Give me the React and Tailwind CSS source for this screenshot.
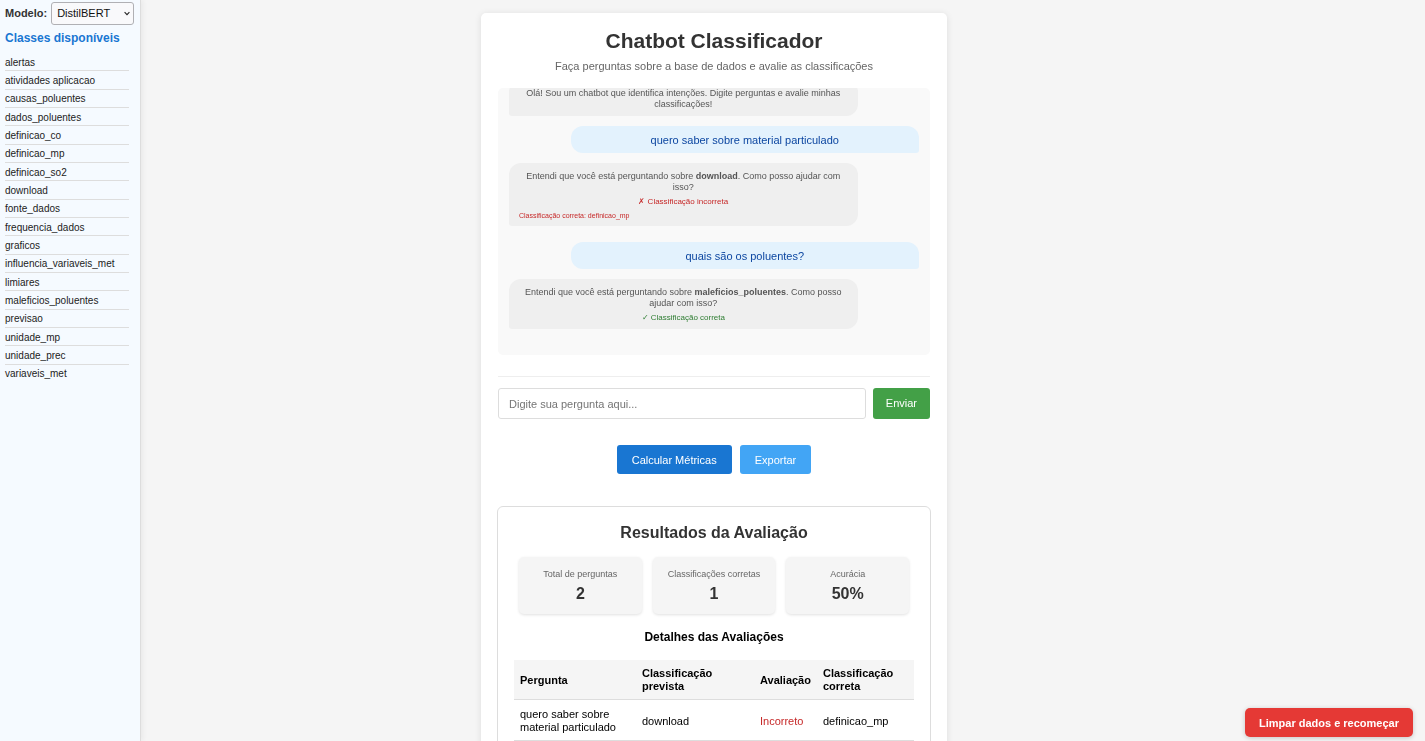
import { useState } from "react";

const classes = [
  "alertas",
  "atividades aplicacao",
  "causas_poluentes",
  "dados_poluentes",
  "definicao_co",
  "definicao_mp",
  "definicao_so2",
  "download",
  "fonte_dados",
  "frequencia_dados",
  "graficos",
  "influencia_variaveis_met",
  "limiares",
  "maleficios_poluentes",
  "previsao",
  "unidade_mp",
  "unidade_prec",
  "variaveis_met",
];

const stats = [
  { label: "Total de perguntas", value: "2" },
  { label: "Classificações corretas", value: "1" },
  { label: "Acurácia", value: "50%" },
];

function Sidebar() {
  return (
    <aside className="border-r border-[#dddddd] bg-[#f5faff] px-[5px] pt-0.5 shadow-[2px_0_5px_rgba(0,0,0,0.05)]">
      <div className="flex items-center gap-1">
        <label htmlFor="modelo" className="text-[11px] leading-[13px] font-bold text-[#333333]">
          Modelo:
        </label>
        <div className="relative">
          <select
            id="modelo"
            className="block h-[23px] w-[83px] appearance-none rounded-[3px] border border-[#b0b0b4] bg-[#f9f9fb] pl-[5px] text-[11px] text-[#111111]"
          >
            <option>DistilBERT</option>
            <option>BERT</option>
          </select>
          <svg
            className="pointer-events-none absolute top-[9px] right-1 h-[5px] w-[6px]"
            viewBox="0 0 6 5"
            fill="none"
            stroke="#222222"
            strokeWidth="1.1"
            aria-hidden="true"
          >
            <path d="M0.6 1.2 3 3.6 5.4 1.2" />
          </svg>
        </div>
      </div>
      <h2 className="mt-1.5 text-[12px] leading-[15px] font-bold text-[#1976d2]">Classes disponíveis</h2>
      <ul className="mt-[7px] mr-1.5 grid h-[330px] auto-rows-fr">
        {classes.map((name) => (
          <li
            key={name}
            className="flex items-center border-b border-[#dddddd] pt-0.5 text-[10px] leading-3 text-[#222222] last:border-transparent"
          >
            {name}
          </li>
        ))}
      </ul>
    </aside>
  );
}

function BotMessage({ children }) {
  return (
    <div className="w-[85%] self-start rounded-[12px] rounded-bl-[3px] bg-[#efefef] px-2.5 pt-2 pb-1.5 text-center text-[9px] leading-[11px] text-[#555555]">
      {children}
    </div>
  );
}

function UserMessage({ children }) {
  return (
    <div className="w-[85%] self-end rounded-[12px] rounded-br-[3px] bg-[#e3f2fd] px-2.5 pt-2 pb-1.5 text-center text-[11px] leading-[13px] font-medium text-[#0d47a1]">
      {children}
    </div>
  );
}

function Chat() {
  return (
    <div className="mt-3.5 flex h-[267px] flex-col-reverse overflow-y-auto rounded-[5px] bg-[#f9f9f9] [scrollbar-width:none]">
      <div className="flex flex-col gap-2.5 px-[11px] pt-[11px] pb-[26px]">
        <BotMessage>
          <p>Olá! Sou um chatbot que identifica intenções. Digite perguntas e avalie minhas classificações!</p>
        </BotMessage>
        <UserMessage>quero saber sobre material particulado</UserMessage>
        <BotMessage>
          <p>
            Entendi que você está perguntando sobre <strong>download</strong>. Como posso ajudar com isso?
          </p>
          <p className="mt-1 text-[8px] leading-[9px] text-[#c62828]">✗ Classificação incorreta</p>
          <p className="mt-1.5 text-left text-[7px] leading-2 text-[#c62828]">Classificação correta: definicao_mp</p>
        </BotMessage>
        <div className="mt-1.5 flex flex-col">
          <UserMessage>quais são os poluentes?</UserMessage>
        </div>
        <BotMessage>
          <p>
            Entendi que você está perguntando sobre <strong>maleficios_poluentes</strong>. Como posso ajudar com isso?
          </p>
          <p className="mt-1 mb-px text-[8px] leading-[9px] text-[#2e7d32]">✓ Classificação correta</p>
        </BotMessage>
      </div>
    </div>
  );
}

function Results() {
  return (
    <section className="-mx-px mt-8 rounded-[6px] border border-[#dddddd] px-4 pt-4 pb-4">
      <h2 className="text-center text-[16px] leading-5 font-bold text-[#333333]">Resultados da Avaliação</h2>
      <div className="mx-[5px] mt-3.5 grid grid-cols-3 gap-[11px]">
        {stats.map((stat) => (
          <div
            key={stat.label}
            className="rounded-[5px] bg-[#f5f5f5] pt-[11px] pb-[11px] text-center shadow-[0_1px_3px_rgba(0,0,0,0.12)]"
          >
            <div className="text-[9px] leading-3 text-[#666666]">{stat.label}</div>
            <div className="mt-[5px] text-[16px] leading-[18px] font-bold text-[#333333]">{stat.value}</div>
          </div>
        ))}
      </div>
      <h3 className="mt-4 text-center text-[12px] leading-[15px] font-bold text-black">Detalhes das Avaliações</h3>
      <table className="mt-[15px] w-full table-fixed border-collapse text-left text-[11px] leading-[13px] text-black">
        <colgroup>
          <col className="w-[122px]" />
          <col className="w-[118px]" />
          <col className="w-[63px]" />
          <col />
        </colgroup>
        <thead>
          <tr className="border-b border-[#dddddd] bg-[#f5f5f5]">
            <th className="pt-[7px] pb-1.5 pl-1.5">Pergunta</th>
            <th className="pt-[7px] pr-8 pb-1.5 pl-1.5">Classificação prevista</th>
            <th className="pt-[7px] pb-1.5 pl-1.5">Avaliação</th>
            <th className="pt-[7px] pb-1.5 pl-1.5">Classificação correta</th>
          </tr>
        </thead>
        <tbody className="font-medium">
          <tr className="border-b border-[#dddddd]">
            <td className="pt-2 pb-1.5 pl-1.5">quero saber sobre material particulado</td>
            <td className="pt-2 pb-1.5 pl-1.5">download</td>
            <td className="pt-2 pb-1.5 pl-1.5 text-[#c62828]">Incorreto</td>
            <td className="pt-2 pb-1.5 pl-1.5">definicao_mp</td>
          </tr>
          <tr className="border-b border-[#dddddd]">
            <td className="pt-2 pb-1.5 pl-1.5">quais são os poluentes?</td>
            <td className="pt-2 pb-1.5 pl-1.5">maleficios_poluentes</td>
            <td className="pt-2 pb-1.5 pl-1.5 text-[#2e7d32]">Correto</td>
            <td className="pt-2 pb-1.5 pl-1.5">-</td>
          </tr>
        </tbody>
      </table>
    </section>
  );
}

export default function App() {
  const [question, setQuestion] = useState("");

  return (
    <div className="grid h-screen grid-cols-[141px_1fr_138px] overflow-hidden bg-[#f5f5f5] font-['Liberation_Sans',Arial,sans-serif]">
      <Sidebar />
      <main className="overflow-y-auto py-[13px] [scrollbar-width:none]">
        <div className="mx-auto max-w-[466px] rounded-[5px] bg-white px-[17px] pt-[15px] pb-[17px] shadow-[0_1px_7px_rgba(0,0,0,0.1)]">
          <h1 className="text-center text-[21px] leading-[26px] font-bold text-[#333333]">Chatbot Classificador</h1>
          <p className="mt-[5px] text-center text-[11px] leading-[15px] text-[#666666]">
            Faça perguntas sobre a base de dados e avalie as classificações
          </p>
          <Chat />
          <form
            className="mt-[21px] flex gap-[7px] border-t border-[#eeeeee] pt-[11px]"
            onSubmit={(event) => event.preventDefault()}
          >
            <input
              type="text"
              aria-label="Digite sua pergunta"
              placeholder="Digite sua pergunta aqui..."
              value={question}
              onChange={(event) => setQuestion(event.target.value)}
              className="h-[31px] min-w-0 flex-1 rounded-[3px] border border-[#dddddd] px-2.5 text-[11px] placeholder:text-[#757575]"
            />
            <button
              type="submit"
              className="h-[31px] rounded-[3px] bg-[#43a047] px-[13px] text-[11px] font-medium text-white"
            >
              Enviar
            </button>
          </form>
          <div className="mt-[26px] flex justify-center gap-2">
            <button
              type="button"
              className="h-[29px] rounded-[3px] bg-[#1976d2] px-[15px] pt-px text-[11px] font-medium text-white"
            >
              Calcular Métricas
            </button>
            <button
              type="button"
              className="h-[29px] rounded-[3px] bg-[#42a5f5] px-[15px] pt-px text-[11px] font-medium text-white"
            >
              Exportar
            </button>
          </div>
          <Results />
        </div>
      </main>
      <button
        type="button"
        className="fixed right-3 bottom-1 h-[29px] rounded-[5px] bg-[#e53935] px-3.5 pt-px text-[11px] font-bold text-white shadow-[0_1px_5px_rgba(0,0,0,0.2)]"
      >
        Limpar dados e recomeçar
      </button>
    </div>
  );
}
